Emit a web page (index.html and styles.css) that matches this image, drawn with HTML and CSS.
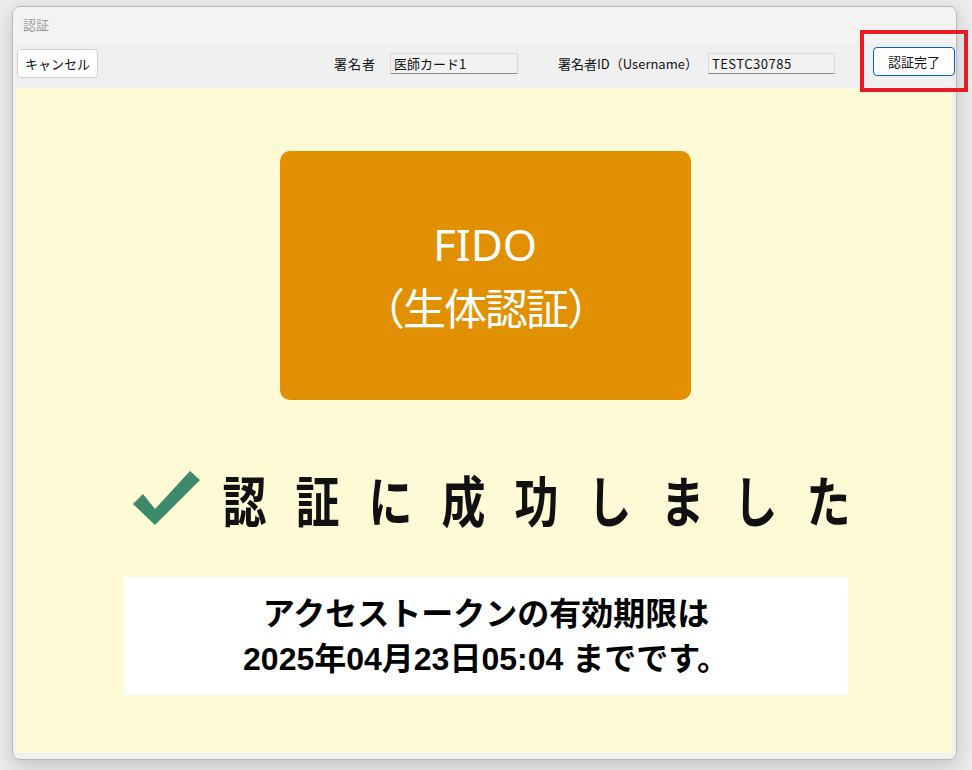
FILE: index.html
```html
<!DOCTYPE html>
<html lang="ja">
<head>
<meta charset="utf-8">
<title>認証</title>
<link rel="stylesheet" href="styles.css">
</head>
<body>
<div class="window">
  <div class="titlebar">認証</div>
  <div class="toolbar">
    <button class="btn cancel">キャンセル</button>
    <span class="label label-signer">署名者</span>
    <div class="field field-signer">医師カード1</div>
    <span class="label label-id">署名者ID（Username）</span>
    <div class="field field-id">TESTC30785</div>
    <button class="btn done">認証完了</button>
  </div>
  <div class="content">
    <div class="fido">
      <div>FIDO</div>
      <div>（生体認証）</div>
    </div>
    <div class="result">
      <svg class="check" width="70" height="56" viewBox="0 0 70 56">
        <polygon points="1,33 11,23 23,38 58,0 68,9 23,54" fill="#3b8a6b"/>
      </svg>
      <div class="result-text">認証に成功しました</div>
    </div>
    <div class="token">
      <div>アクセストークンの有効期限は</div>
      <div>2025年04月23日05:04 までです。</div>
    </div>
  </div>
</div>
<div class="highlight"></div>
</body>
</html>
```
FILE: styles.css
```css
html, body {
  margin: 0;
  padding: 0;
}
body {
  width: 972px;
  height: 770px;
  background: #ececec;
  font-family: "Noto Sans CJK JP", "Noto Sans", sans-serif;
  position: relative;
  overflow: hidden;
}
.window {
  position: absolute;
  left: 12px;
  top: 6px;
  width: 943px;
  height: 752px;
  border: 1px solid #b9b9b9;
  border-radius: 8px;
  background: #f0f0f0;
  box-shadow: 0 6px 20px rgba(0,0,0,0.18);
  display: flex;
  flex-direction: column;
  overflow: hidden;
}
.titlebar {
  height: 36px;
  background: #f3f3f3;
  color: #9a9a9a;
  font-size: 13px;
  line-height: 36px;
  padding-left: 10px;
}
.toolbar {
  height: 45px;
  box-sizing: border-box;
  padding-bottom: 4px;
  background: #f0f0f0;
  display: flex;
  align-items: center;
  font-size: 13px;
  color: #111;
}
.btn {
  font-family: "Noto Sans CJK JP", sans-serif;
  font-size: 13px;
  background: #fff;
  color: #111;
  padding: 0;
  height: 29px;
  border-radius: 4px;
}
.cancel {
  margin-left: 4px;
  width: 81px;
  border: 1px solid #cfcfcf;
}
.label {
  white-space: nowrap;
}
.label-signer {
  margin-left: 236px;
  letter-spacing: 1px;
}
.field {
  height: 19px;
  line-height: 19px;
  background: #f2f2f2;
  border: 1px solid #d9d9d9;
  border-bottom-color: #8a8a8a;
  padding-left: 3px;
  font-size: 13px;
  box-sizing: content-box;
}
.field-signer {
  margin-left: 14px;
  width: 123px;
}
.label-id {
  margin-left: 40px;
}
.field-id {
  margin-left: 10px;
  width: 122px;
  letter-spacing: 0.5px;
}
.done {
  margin-left: 38px;
  width: 82px;
  border: 1px solid #0067c0;
  margin-top: -4px;
}
.content {
  flex: 1;
  margin: 0 4px 6px 3px;
  background: #fffad6;
  display: flex;
  flex-direction: column;
  align-items: center;
}
.fido {
  margin-top: 63px;
  margin-left: 2px;
  width: 411px;
  height: 249px;
  background: #e09000;
  border-radius: 10px;
  color: #fff;
  font-family: "Noto Sans", "Noto Sans CJK JP", sans-serif;
  font-size: 44px;
  line-height: 62px;
  display: flex;
  flex-direction: column;
  align-items: center;
  justify-content: center;
  padding-bottom: 2px;
  box-sizing: border-box;
}
.fido div:last-child {
  font-family: "Noto Sans CJK JP", sans-serif;
  font-size: 43px;
  letter-spacing: -2px;
}
.result {
  margin-top: 69px;
  height: 58px;
  display: flex;
  align-items: center;
  margin-left: 14px;
}
.check {
  display: block;
  margin-top: 1px;
}
.result-text {
  margin-left: 21px;
  font-family: "Noto Sans CJK JP", sans-serif;
  font-weight: 700;
  font-size: 44px;
  letter-spacing: 29px;
  margin-right: -29px;
  color: #111;
  line-height: 58px;
  transform: scaleY(1.25);
}
.token {
  margin-top: 50px;
  margin-left: 4px;
  width: 724px;
  height: 118px;
  box-sizing: border-box;
  padding-top: 15px;
  background: #fff;
  text-align: center;
  font-family: "Liberation Sans", "Noto Sans CJK JP", sans-serif;
  font-weight: 700;
  font-size: 32px;
  line-height: 45px;
  color: #000;
}
.highlight {
  position: absolute;
  left: 860px;
  top: 30px;
  width: 100px;
  height: 54px;
  border: 4px solid #e81c24;
}
```
